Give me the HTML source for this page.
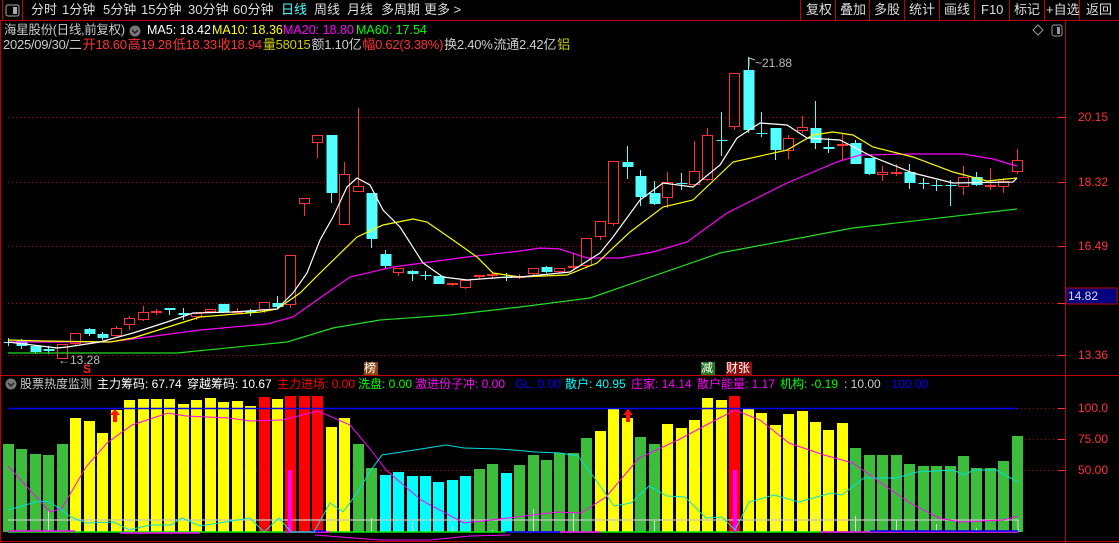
<!DOCTYPE html>
<html><head><meta charset="utf-8"><style>
body{margin:0;background:#000;width:1119px;height:543px;overflow:hidden;font-family:"Liberation Sans","Noto Sans CJK SC",sans-serif;}
svg{position:absolute;left:0;top:0}
.t{position:absolute;font-size:12px;white-space:nowrap;line-height:14px}
.m{font-size:13px;top:3px}
.l2 span{margin-right:1px}
</style></head><body>
<svg id="s" width="1119" height="543" xmlns="http://www.w3.org/2000/svg">
<rect width="1119" height="543" fill="#000"/>
<g stroke="#c00000" stroke-width="1" fill="none">
<line x1="0" y1="20.5" x2="1119" y2="20.5"/>
<line x1="2.5" y1="0" x2="2.5" y2="20"/><line x1="22.5" y1="0" x2="22.5" y2="20"/>
<line x1="800.5" y1="0" x2="800.5" y2="20"/><line x1="835.5" y1="0" x2="835.5" y2="20"/><line x1="869.5" y1="0" x2="869.5" y2="20"/><line x1="904.5" y1="0" x2="904.5" y2="20"/><line x1="939.5" y1="0" x2="939.5" y2="20"/><line x1="974.5" y1="0" x2="974.5" y2="20"/><line x1="1009.5" y1="0" x2="1009.5" y2="20"/><line x1="1044.5" y1="0" x2="1044.5" y2="20"/><line x1="1079.5" y1="0" x2="1079.5" y2="20"/>
<line x1="1065.5" y1="20" x2="1065.5" y2="543"/>
<line x1="0.5" y1="20" x2="0.5" y2="543"/>
<line x1="0" y1="375.5" x2="1119" y2="375.5"/>
<line x1="0" y1="541.5" x2="1119" y2="541.5"/>
</g>
<g stroke="#b00000" stroke-dasharray="1,3" fill="none">
<line x1="8" y1="117.5" x2="1065" y2="117.5"/><line x1="8" y1="182.5" x2="1065" y2="182.5"/><line x1="8" y1="246.5" x2="1065" y2="246.5"/><line x1="8" y1="303.5" x2="1065" y2="303.5"/><line x1="8" y1="355.5" x2="1065" y2="355.5"/>
<line x1="8" y1="470.5" x2="1065" y2="470.5"/><line x1="1017" y1="408.5" x2="1065" y2="408.5"/><line x1="1017" y1="439.5" x2="1065" y2="439.5"/>
</g>
<g stroke="#ff3030"><line x1="1058" y1="117.5" x2="1065" y2="117.5"/><line x1="1058" y1="182.5" x2="1065" y2="182.5"/><line x1="1058" y1="246.5" x2="1065" y2="246.5"/><line x1="1058" y1="303.5" x2="1065" y2="303.5"/><line x1="1058" y1="355.5" x2="1065" y2="355.5"/><line x1="1058" y1="408.5" x2="1065" y2="408.5"/><line x1="1058" y1="439.5" x2="1065" y2="439.5"/><line x1="1058" y1="470.5" x2="1065" y2="470.5"/></g>
<g id="candles"></g>
<g fill="none" stroke-width="1.2">
<polyline stroke="#22dd22" points="8,353 177,353 287,342 333,328 380,320 450,315 520,307 590,298 720,253 853,228 1017,209"/>
<polyline stroke="#ff00ff" points="8,342 110,342 200,330 267,324 293,317 317,300 350,277 393,267 467,257 520,251 540,248 560,249 587,258 620,258 653,252 687,242 727,213 787,183 837,162 860,155 913,154 963,154 993,159 1017,166"/>
<polyline stroke="#ffff00" points="8,340 43,341 110,342 133,338 200,317 260,312 277,309 300,293 320,273 357,237 383,225 413,219 427,222 453,240 477,257 493,273 520,277 567,275 597,263 630,232 663,207 693,200 733,162 787,150 813,135 833,132 853,135 873,147 913,157 953,172 987,181 1017,178"/>
<polyline stroke="#ffffff" points="8,342 57,348 67,347 100,342 133,333 167,322 193,313 233,312 277,309 293,293 307,273 320,240 333,217 347,187 357,178 370,185 383,210 400,227 423,263 443,277 467,280 507,277 520,277 570,272 600,253 613,237 640,200 663,183 693,187 720,165 737,138 760,123 787,125 807,138 840,140 873,157 913,173 953,183 1013,182 1017,178"/>
</g>
<g id="bars"></g>
<line x1="8" y1="408.5" x2="1017" y2="408.5" stroke="#0000ff" stroke-width="1.5"/>
<polyline fill="none" stroke="#c8c8c8" stroke-width="1.3" points="8,520 1018,520 1018,532"/>
<line x1="8" y1="532" x2="1018" y2="532" stroke="#00ee00" stroke-width="1.5"/>
<g stroke="#ff00ff" stroke-width="1.5"><line x1="8" y1="531" x2="75" y2="531"/><line x1="120" y1="533" x2="200" y2="533"/><line x1="285" y1="532" x2="330" y2="532"/><line x1="520" y1="532" x2="600" y2="532"/><line x1="820" y1="532" x2="1018" y2="532"/></g>
<polyline fill="none" stroke="#ff00ff" stroke-width="1" points="315,535 340,537 380,540 430,540 470,536 510,535"/>
<g stroke="#0000ff" stroke-width="1.5"><line x1="312" y1="531" x2="325" y2="531"/><line x1="505" y1="532" x2="560" y2="532"/><line x1="870" y1="531" x2="1018" y2="531"/></g>
<rect x="288" y="470" width="4" height="62" fill="#ff00ff"/>
<rect x="733" y="470" width="4" height="62" fill="#ff00ff"/>
<g fill="none" stroke-width="1">
<polyline stroke="#ff00ff" points="8,466 50,512 62,508 86,467 107,443 132,425 168,413 186,416 229,418 250,421 282,420 318,411 350,425 371,450 386,470 421,500 464,523 500,519 557,512 581,513 606,497 639,458 678,440 710,423 735,410 760,420 789,443 824,455 853,463 881,483 910,503 939,518 960,522 1003,520 1018,516"/>
<polyline stroke="#00e0e0" points="8,510 39,501 50,502 71,517 86,523 114,522 129,530 150,525 171,525 182,518 200,526 250,518 264,532 279,518 291,532 314,532 330,503 343,512 357,493 371,470 382,455 421,449 446,445 464,448 500,449 536,452 560,453 578,456 596,480 614,506 631,503 649,486 667,496 685,497 706,518 722,517 735,530 749,502 774,495 799,502 831,493 842,495 864,478 896,478 917,472 953,470 964,475 974,470 996,470 1018,482"/>
</g>
<g fill="#ff1010"><polygon points="115,409 110,415 113,415 113,422 117,422 117,415 120,415"/><polygon points="628,409 623,415 626,415 626,422 630,422 630,415 633,415"/></g>
<rect x="6" y="5" width="13" height="11" rx="2" fill="none" stroke="#aaa"/><rect x="13" y="7" width="4" height="7" fill="#aaa"/>
<rect x="1052" y="25" width="10" height="11" rx="2" fill="none" stroke="#999"/><rect x="1057" y="27" width="3" height="7" fill="#999"/>
<polygon points="1038,25 1043,30 1038,35 1033,30" fill="none" stroke="#999"/>
<circle cx="135" cy="31" r="5.5" fill="#777"/><polyline points="132,30 135,33 138,30" fill="none" stroke="#222" stroke-width="1.5"/>
<circle cx="11" cy="384" r="5.5" fill="#777"/><polyline points="8,383 11,386 14,383" fill="none" stroke="#222" stroke-width="1.5"/>
<rect x="1066" y="288" width="51" height="16" fill="#000080" stroke="#c00000"/>
<rect x="364" y="362" width="14" height="13" fill="#8b4513"/>
<rect x="701" y="362" width="14" height="13" fill="#1e7a1e"/>
<rect x="726" y="362" width="26" height="13" fill="#8b1010"/>
<polyline points="749,66 749,58 755,60" fill="none" stroke="#bbb"/>
</svg>
<div class="t m" style="left:31px;color:#ddd">分时</div>
<div class="t m" style="left:62px;color:#ddd">1分钟</div>
<div class="t m" style="left:103px;color:#ddd">5分钟</div>
<div class="t m" style="left:141px;color:#ddd">15分钟</div>
<div class="t m" style="left:188px;color:#ddd">30分钟</div>
<div class="t m" style="left:233px;color:#ddd">60分钟</div>
<div class="t m" style="left:281px;color:#5ff">日线</div>
<div class="t m" style="left:314px;color:#ddd">周线</div>
<div class="t m" style="left:347px;color:#ddd">月线</div>
<div class="t m" style="left:381px;color:#ddd">多周期</div>
<div class="t m" style="left:424px;color:#ddd">更多 &gt;</div>
<div class="t m" style="left:806px;color:#ddd">复权</div>
<div class="t m" style="left:840px;color:#ddd">叠加</div>
<div class="t m" style="left:874px;color:#ddd">多股</div>
<div class="t m" style="left:909px;color:#ddd">统计</div>
<div class="t m" style="left:944px;color:#ddd">画线</div>
<div class="t m" style="left:981px;color:#ddd">F10</div>
<div class="t m" style="left:1014px;color:#ddd">标记</div>
<div class="t m" style="left:1046px;color:#ddd">+自选</div>
<div class="t m" style="left:1086px;color:#ddd">返回</div>
<div class="t" style="left:4px;top:23px;color:#ccc;font-size:12.5px;letter-spacing:-0.3px">海星股份(日线,前复权)</div>
<div class="t" style="left:147px;top:23px;color:#fff;font-size:12.5px">MA5: 18.42</div>
<div class="t" style="left:212px;top:23px;color:#ff0;font-size:12.5px">MA10: 18.36</div>
<div class="t" style="left:283px;top:23px;color:#f0f;font-size:12.5px">MA20: 18.80</div>
<div class="t" style="left:356px;top:23px;color:#0f0;font-size:12.5px">MA60: 17.54</div>
<div class="t l2" style="left:3px;top:38px;color:#ccc;font-size:13px;letter-spacing:-0.25px"><span>2025/09/30/二</span><span style="color:#f33">开18.60</span><span style="color:#f33">高19.28</span><span style="color:#f33">低18.33</span><span style="color:#f33">收18.94</span><span style="color:#cc0">量58015</span><span>额1.10亿</span><span style="color:#f33">幅0.62(3.38%)</span><span>换2.40%</span><span>流通2.42亿</span><span style="color:#cc0">铝</span></div>
<div class="t" style="left:755px;top:56px;color:#bbb">~21.88</div>
<div class="t" style="left:58px;top:353px;color:#bbb">←13.28</div>
<div class="t" style="left:83px;top:362px;color:#f22;font-weight:bold">S</div>
<div class="t" style="left:364px;top:361px;color:#fff">榜</div>
<div class="t" style="left:701px;top:361px;color:#fff">减</div>
<div class="t" style="left:726px;top:361px;color:#fff">财张</div>
<div class="t" style="left:1078px;top:110px;color:#f33">20.15</div>
<div class="t" style="left:1078px;top:175px;color:#f33">18.32</div>
<div class="t" style="left:1078px;top:239px;color:#f33">16.49</div>
<div class="t" style="left:1068px;top:289px;color:#ddd">14.82</div>
<div class="t" style="left:1078px;top:348px;color:#f33">13.36</div>
<div class="t" style="left:1078px;top:401px;color:#f33">100.0</div>
<div class="t" style="left:1078px;top:432px;color:#f33">75.00</div>
<div class="t" style="left:1078px;top:463px;color:#f33">50.00</div>
<div class="t" style="left:20px;top:377px;color:#ccc">股票热度监测</div>
<div class="t" style="left:97px;top:377px;color:#fff">主力筹码: 67.74</div>
<div class="t" style="left:187px;top:377px;color:#fff">穿越筹码: 10.67</div>
<div class="t" style="left:277px;top:377px;color:#f00">主力进场: 0.00</div>
<div class="t" style="left:358px;top:377px;color:#0f0">洗盘: 0.00</div>
<div class="t" style="left:415px;top:377px;color:#f0f">激进份子冲: 0.00</div>
<div class="t" style="left:515px;top:377px;color:#00f">GL: 0.00</div>
<div class="t" style="left:565px;top:377px;color:#0ff">散户: 40.95</div>
<div class="t" style="left:631px;top:377px;color:#f0f">庄家: 14.14</div>
<div class="t" style="left:697px;top:377px;color:#f0f">散户能量: 1.17</div>
<div class="t" style="left:780px;top:377px;color:#0f0">机构: -0.19</div>
<div class="t" style="left:844px;top:377px;color:#ccc">: 10.00</div>
<div class="t" style="left:885px;top:377px;color:#00f">: 100.00</div>
<script>
var C=[["c",342,343,338,346],["c",340,346,339,349],["c",346,352,345,354],["c",349,351,346,354],["r",344,359,344,359],["r",333,344,333,345],["c",329,334,328,336],["c",334,338,332,340],["r",328,336,326,338],["r",318,325,316,330],["r",312,320,306,321],["r",311,313,309,315],["c",308,310,308,315],["c",313,315,308,320],["r",313,317,312,320],["r",309,312,309,313],["c",304,312,304,313],["r",311,312,308,314],["c",311,313,309,316],["r",302,310,302,313],["c",303,307,296,309],["r",255,305,255,308],["r",198,204,198,216],["r",135,143,135,158],["c",135,193,135,203],["r",174,225,162,225],["r",186,192,108,192],["c",193,239,193,248],["c",254,266,250,268],["r",268,273,268,276],["c",271,274,270,281],["c",275,276,271,280],["c",276,284,276,284],["r",283,285,283,286],["r",280,288,280,289],["r",275,277,275,279],["r",274,276,272,279],["c",277,278,273,281],["r",276,277,274,279],["r",268,274,268,275],["c",267,272,266,273],["r",268,272,268,273],["r",266,268,254,269],["r",238,266,238,268],["r",221,237,221,240],["r",161,224,161,226],["c",162,167,146,179],["c",176,197,170,206],["c",193,204,181,205],["r",182,198,172,208],["c",183,184,173,190],["r",171,185,141,186],["r",135,180,128,181],["c",140,141,112,156],["r",73,127,73,130],["c",70,130,57,133],["c",133,134,112,137],["c",128,150,128,160],["r",138,151,135,159],["r",127,131,116,133],["c",128,143,101,149],["c",147,149,138,153],["r",144,145,134,160],["c",143,164,140,164],["c",158,174,158,175],["r",172,175,166,181],["r",172,173,164,176],["c",172,183,164,189],["c",183,184,178,189],["c",185,186,180,191],["c",185,186,180,206],["r",177,187,166,195],["c",177,185,172,186],["r",185,187,168,190],["r",181,187,178,193],["r",160,172,149,174]];
var T=[444,449,454,455,444,418,421,433,410,400,399,399,399,404,400,398,402,401,406,397,399,396,396,396,427,418,444,468,475,472,476,476,482,480,476,469,464,473,465,455,460,453,453,438,431,409,418,437,444,424,428,420,398,400,396,409,413,425,414,411,422,430,423,448,455,455,455,464,466,466,466,456,468,468,461,436];
var K="GGGGGYYYYYYYYYYYYYYRYRRRYYGGCCCCCCCGGCGGGGGGYYYGGYYYYYRYYYYYYYYGGGGGGGGGGGGG";
var col={G:"#3cbe3c",Y:"#ffff00",R:"#ff0000",C:"#00ffff"};
var ns="http://www.w3.org/2000/svg",g=document.getElementById("candles"),b=document.getElementById("bars");
function el(p,t,a){var e=document.createElementNS(ns,t);for(var k in a)e.setAttribute(k,a[k]);p.appendChild(e);}
for(var i=0;i<76;i++){var x=Math.round(8+i*13.45),d=C[i],c=d[0]=="r"?"#ff3232":"#54ffff";
el(g,"line",{x1:x+.5,x2:x+.5,y1:d[3],y2:d[4],stroke:c});
var h=Math.max(1,d[2]-d[1]);
if(d[0]=="r")el(g,"rect",{x:x-4.5,y:d[1]+.5,width:10,height:Math.max(1,h-1),fill:"#000",stroke:c});
else el(g,"rect",{x:x-4.5,y:d[1],width:11,height:h,fill:c});
el(b,"rect",{x:x-5,y:T[i],width:11,height:532-T[i],fill:col[K[i]]});
if(i%3==0)el(b,"line",{x1:x+.5,x2:x+.5,y1:532-(i*7%25),y2:532,stroke:"#ddd"});}
</script>
</body></html>
